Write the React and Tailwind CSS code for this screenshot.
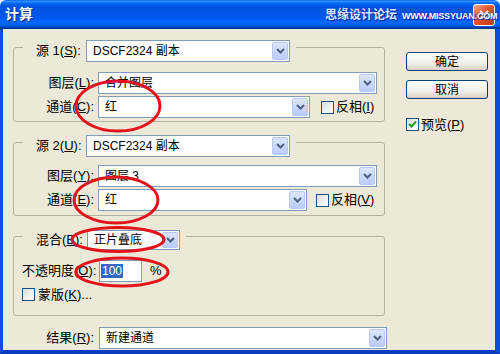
import React from "react";

function Chevron() {
  return (
    <svg width="9" height="6" viewBox="0 0 9 6">
      <path d="M1 1 L4.5 4.5 L8 1" stroke="#4d6185" strokeWidth="2" fill="none" />
    </svg>
  );
}

function Combo({ className, text }) {
  return (
    <div className={"flex items-stretch bg-white border border-[#7f9db9] " + className}>
      <div className="flex-1 flex items-center pl-[6px] text-[12px] text-black whitespace-nowrap overflow-hidden">{text}</div>
      <div className="w-[16px] m-[1px] rounded-[2px] border border-[#b6c9f4] bg-[linear-gradient(#dce6fd,#b9ccf8)] flex items-center justify-center">
        <Chevron />
      </div>
    </div>
  );
}

function Check({ checked }) {
  return (
    <div className="w-[13px] h-[13px] border border-[#1c5180] bg-[linear-gradient(135deg,#dcdcd7,#ffffff)] flex items-center justify-center shrink-0">
      {checked && (
        <svg width="9" height="9" viewBox="0 0 9 9">
          <path d="M1 4 L3.5 6.5 L8 1.5" stroke="#21a121" strokeWidth="2" fill="none" />
        </svg>
      )}
    </div>
  );
}

function Btn({ children }) {
  return (
    <div className="w-[82px] h-[19px] rounded-[3px] border border-[#003c74] bg-[linear-gradient(#ffffff,#f1f0ea_60%,#d6d0c5)] flex items-center justify-center text-[12px] text-black">
      {children}
    </div>
  );
}

export default function App() {
  return (
    <div className="relative w-[500px] h-[354px] overflow-hidden flex flex-col font-['Liberation_Sans','Noto_Sans_CJK_SC',sans-serif] text-black">
      {/* Title bar */}
      <div className="h-[29px] shrink-0 flex items-center rounded-t-[6px] bg-[linear-gradient(#0058ee_0%,#3593ff_4%,#288eff_6%,#127dff_8%,#036ffc_10%,#0262ee_14%,#0057e5_20%,#0054e3_24%,#0055eb_56%,#005bf5_66%,#026afe_76%,#0062ef_86%,#0052d6_92%,#0040ab_94%,#003092_100%)] px-[4px]">
        <div className="text-white font-bold text-[14px] pl-[1px] [text-shadow:1px_1px_0_#0a1e74]">计算</div>
        <div className="flex-1" />
        <div className="w-[22px] h-[22px] mr-[1px] rounded-[3px] border border-white bg-[linear-gradient(135deg,#f0a58d,#e0562f_45%,#c2391a)] flex items-center justify-center">
          <svg width="12" height="12" viewBox="0 0 12 12">
            <path d="M2 2 L10 10 M10 2 L2 10" stroke="white" strokeWidth="2.2" />
          </svg>
        </div>
      </div>

      {/* Body */}
      <div className="flex-1 flex bg-[#ece9d8] border-l-[3px] border-r-[5px] border-b-[4px] border-l-[#0a4fd8] border-r-[#0a4fd8] border-b-[#0a3cc0]">
        {/* left column */}
        <div className="pl-[10px] pt-[3px] flex flex-col">
          {/* group 1 */}
          <fieldset className="w-[372px] border border-[#b4b1a1] rounded-[3px] pb-[3px]">
            <legend className="ml-[9px]">
              <div className="flex items-center pt-[8px] pl-[13px] pr-[6px]">
                <div className="w-[50px] text-[13px]">源 1(<u>S</u>):</div>
                <Combo className="w-[204px] h-[22px]" text="DSCF2324 副本" />
              </div>
            </legend>
            <div className="pt-[10px] flex flex-col gap-[2px]">
              <div className="flex items-center">
                <div className="w-[80px] text-right text-[13px]">图层(<u>L</u>):</div>
                <Combo className="ml-[4px] w-[279px] h-[22px]" text="合并图层" />
              </div>
              <div className="flex items-center">
                <div className="w-[80px] text-right text-[13px]">通道(<u>C</u>):</div>
                <Combo className="ml-[4px] w-[212px] h-[22px]" text="红" />
                <div className="ml-[11px]"><Check /></div>
                <div className="ml-[2px] text-[13px]">反相(<u>I</u>)</div>
              </div>
            </div>
          </fieldset>

          {/* group 2 */}
          <fieldset className="mt-[5px] w-[372px] border border-[#b4b1a1] rounded-[3px] pb-[4px]">
            <legend className="ml-[9px]">
              <div className="flex items-center pt-[8px] pl-[13px] pr-[6px]">
                <div className="w-[50px] text-[13px]">源 2(<u>U</u>):</div>
                <Combo className="w-[204px] h-[22px]" text="DSCF2324 副本" />
              </div>
            </legend>
            <div className="pt-[8px] flex flex-col gap-[2px]">
              <div className="flex items-center">
                <div className="w-[80px] text-right text-[13px]">图层(<u>Y</u>):</div>
                <Combo className="ml-[4px] w-[279px] h-[22px]" text="图层 3" />
              </div>
              <div className="flex items-center">
                <div className="w-[80px] text-right text-[13px]">通道(<u>E</u>):</div>
                <Combo className="ml-[4px] w-[209px] h-[22px]" text="红" />
                <div className="ml-[9px]"><Check /></div>
                <div className="ml-[2px] text-[13px]">反相(<u>V</u>)</div>
              </div>
            </div>
          </fieldset>

          {/* blend group */}
          <fieldset className="mt-[6px] w-[372px] border border-[#b4b1a1] rounded-[3px] pb-[10px]">
            <legend className="ml-[9px]">
              <div className="flex items-center pt-[8px] pl-[13px] pr-[6px]">
                <div className="w-[51px] text-[13px]">混合(<u>B</u>):</div>
                <Combo className="w-[93px] h-[20px]" text="正片叠底" />
              </div>
            </legend>
            <div className="pt-[10px] pl-[8px] flex flex-col">
              <div className="flex items-center h-[22px]">
                <div className="w-[77px] text-[13px] whitespace-nowrap">不透明度(<u>O</u>):</div>
                <div className="w-[43px] h-[22px] bg-white border border-[#7f9db9] flex items-center pl-[1px]">
                  <span className="bg-[#316ac5] text-white text-[12px] leading-[14px] px-[1px]">100</span>
                </div>
                <div className="ml-[8px] text-[13px]">%</div>
              </div>
              <div className="mt-[3px] flex items-center">
                <Check />
                <div className="ml-[3px] text-[13px]">蒙版(<u>K</u>)...</div>
              </div>
            </div>
          </fieldset>

          {/* result */}
          <div className="mt-[11px] flex items-center">
            <div className="w-[81px] text-right text-[13px]">结果(<u>R</u>):</div>
            <Combo className="ml-[5px] w-[288px] h-[22px]" text="新建通道" />
          </div>
        </div>

        {/* right column */}
        <div className="ml-[19px] pt-[23px] flex flex-col">
          <Btn>确定</Btn>
          <div className="mt-[9px]"><Btn>取消</Btn></div>
          <div className="mt-[16px] flex items-center">
            <Check checked />
            <div className="ml-[2px] text-[13px]">预览(<u>P</u>)</div>
          </div>
        </div>
      </div>

      {/* watermark overlay */}
      <div className="absolute left-[325px] top-[6px] flex items-end gap-[5px] whitespace-nowrap pointer-events-none">
        <span className="text-[12px] font-bold text-[#d8e6ff] [text-shadow:0_0_2px_#0b2fa0,1px_1px_0_#0b2fa0]">思缘设计论坛</span>
        <span className="text-[9px] font-bold text-white tracking-[-0.2px] mb-[1px] [text-shadow:0_0_2px_#0b2fa0,1px_1px_0_#0b2fa0]">WWW.MISSYUAN.COM</span>
      </div>

      {/* red annotation ellipses */}
      <svg className="absolute inset-0 pointer-events-none" width="500" height="354" viewBox="0 0 500 354">
        <g fill="none" stroke="#e3131b" strokeWidth="3">
          <ellipse cx="118" cy="106" rx="42" ry="25" />
          <ellipse cx="116" cy="200" rx="42" ry="23" />
          <ellipse cx="118" cy="239.5" rx="46" ry="12" />
          <ellipse cx="122" cy="272" rx="46" ry="14" />
        </g>
      </svg>
    </div>
  );
}
